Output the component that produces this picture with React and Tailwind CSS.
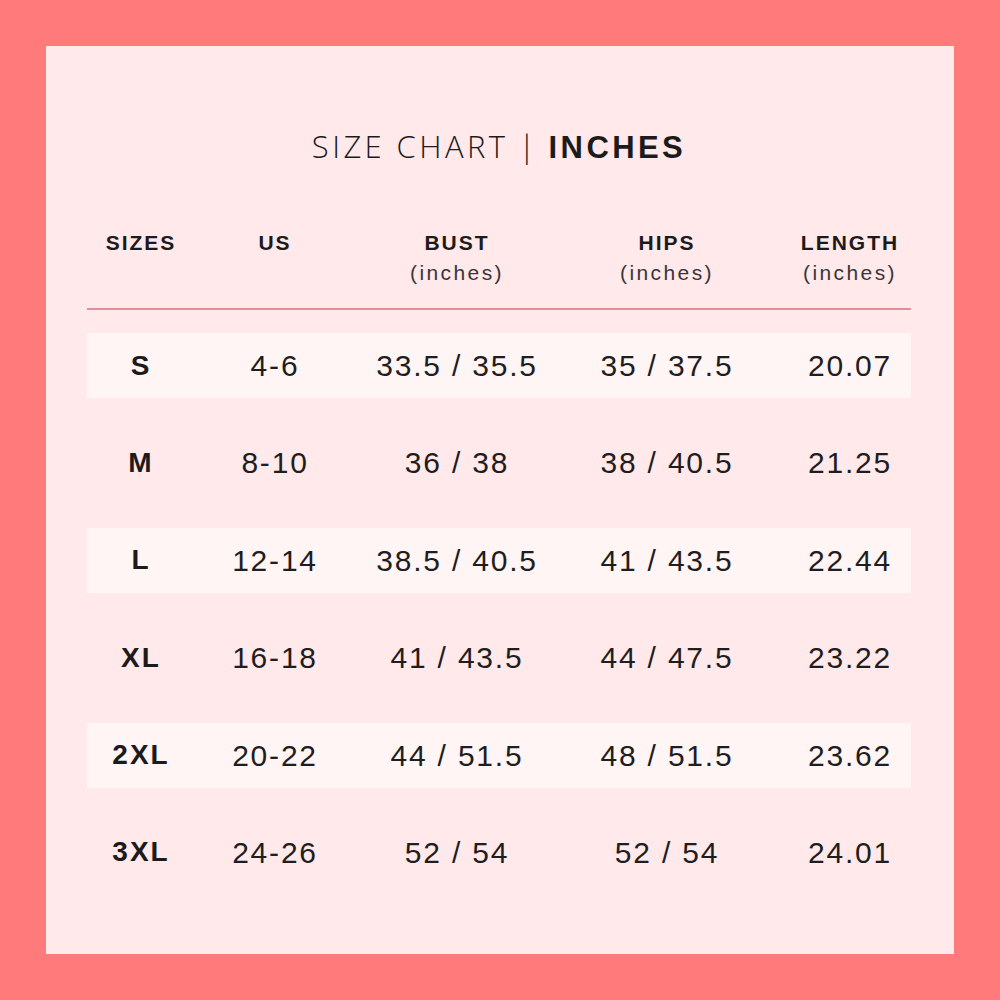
import React from 'react';

// Size chart data
const ROWS = [
  { size: 'S', us: '4-6', bust: '33.5 / 35.5', hips: '35 / 37.5', length: '20.07' },
  { size: 'M', us: '8-10', bust: '36 / 38', hips: '38 / 40.5', length: '21.25' },
  { size: 'L', us: '12-14', bust: '38.5 / 40.5', hips: '41 / 43.5', length: '22.44' },
  { size: 'XL', us: '16-18', bust: '41 / 43.5', hips: '44 / 47.5', length: '23.22' },
  { size: '2XL', us: '20-22', bust: '44 / 51.5', hips: '48 / 51.5', length: '23.62' },
  { size: '3XL', us: '24-26', bust: '52 / 54', hips: '52 / 54', length: '24.01' },
];

const GRID = 'grid grid-cols-[108px_160px_204px_216px_136px]';

const HeaderCell = ({ label, sub, className = '' }) => (
  <div className={`flex flex-col items-center ${className}`}>
    <span className="text-[21px] leading-[30px] font-bold tracking-[2px] text-[#1c1a1b]">{label}</span>
    {sub && (
      <span className="text-[21px] leading-[30px] tracking-[2.4px] text-[#3a3536]">{sub}</span>
    )}
  </div>
);

export default function App() {
  return (
    <div
      className="w-[1000px] h-[1000px] bg-[#ff7b7b] p-[46px]"
      style={{ fontFamily: '"Liberation Sans", Arial, sans-serif' }}
    >
      <div className="h-full bg-[#ffe9ea] pl-[41px] pr-[43px] pt-[80px] flex flex-col">
        {/* Title */}
        <h1 className="text-center text-[31px] leading-[40px] tracking-[3.4px] text-[#1c1a1b]" style={{ fontFamily: '"Open Sans", "Liberation Sans", sans-serif' }}>
          <span className="font-light">SIZE CHART</span>
          <span className="font-light mx-[10px]">|</span>
          <span className="font-bold" style={{ fontFamily: '"Liberation Sans", Arial, sans-serif' }}>INCHES</span>
        </h1>

        {/* Header */}
        <div className={`${GRID} mt-[60px]`}>
          <HeaderCell label="SIZES" />
          <HeaderCell label="US" />
          <HeaderCell label="BUST" sub="(inches)" />
          <HeaderCell label="HIPS" sub="(inches)" />
          <HeaderCell label="LENGTH" sub="(inches)" className="pl-[14px]" />
        </div>

        <div className="mt-[20px] h-[2px] bg-[#e58d9b]" />

        {/* Rows */}
        <div className="mt-[23px] flex flex-col gap-[32.4px]">
          {ROWS.map((row, i) => (
            <div
              key={row.size}
              className={`${GRID} h-[65px] items-center ${i % 2 === 0 ? 'bg-[#fff5f5]' : ''}`}
            >
              <span className="text-center text-[28px] font-bold tracking-[2px] text-[#1c1a1b]">{row.size}</span>
              <span className="text-center text-[30px] tracking-[1.8px] text-[#1f1d1e]">{row.us}</span>
              <span className="text-center text-[30px] tracking-[1.8px] text-[#1f1d1e]">{row.bust}</span>
              <span className="text-center text-[30px] tracking-[1.8px] text-[#1f1d1e]">{row.hips}</span>
              <span className="text-center text-[30px] tracking-[1.8px] text-[#1f1d1e] pl-[14px]">{row.length}</span>
            </div>
          ))}
        </div>
      </div>
    </div>
  );
}
